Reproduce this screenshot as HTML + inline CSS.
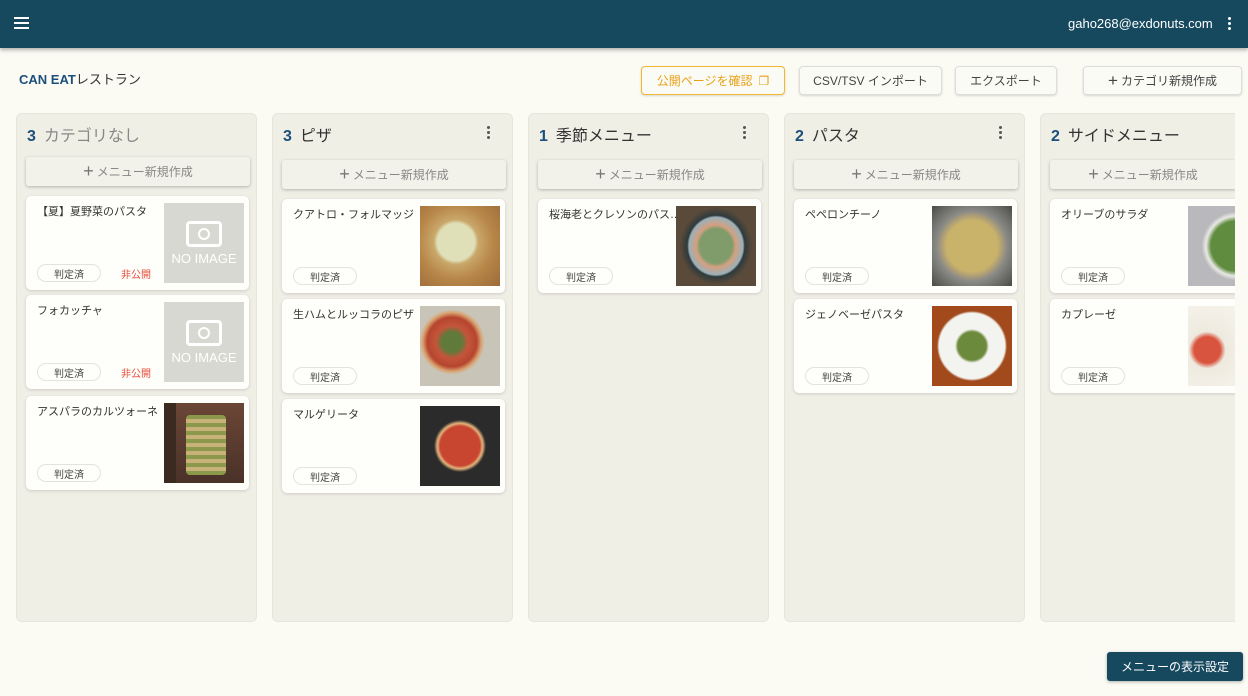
<!DOCTYPE html><html><head><meta charset="utf-8"><style>
*{box-sizing:border-box;margin:0;padding:0}
body{width:1248px;height:696px;overflow:hidden;background:#fbfbf4;font-family:"Liberation Sans","Noto Sans CJK JP",sans-serif;position:relative;color:#333}
.hdr{position:absolute;left:0;top:0;width:1248px;height:48px;background:#16485e;box-shadow:0 2px 4px rgba(0,0,0,.3)}
.abs{position:absolute}
.btn{position:absolute;top:66px;height:29px;border:1px solid #ddd;border-radius:4px;background:#fbfbf6;font-size:12px;color:#444;display:flex;align-items:center;justify-content:center;box-shadow:0 1px 2px rgba(0,0,0,.15)}
.col{position:absolute;top:113px;width:241px;height:509px;background:#f0efe6;border-radius:6px;border:1px solid #e6e5dc;overflow:hidden}
.ch{position:absolute;left:10px;top:8px;font-size:16px;color:#333}
.ch b{color:#1d4f7c;font-weight:bold;margin-right:8px}
.dots{position:absolute;left:214px;top:12px;width:3px;height:14px}
.dots i{display:block;width:3px;height:3px;border-radius:50%;background:#555;margin-bottom:2px}
.add{position:absolute;left:9px;width:224px;height:29px;background:#f3f2ea;border-radius:3px;box-shadow:0 1px 3px rgba(0,0,0,.25);font-size:12px;color:#888;display:flex;align-items:center;justify-content:center}
.add span{font-size:18px;margin-right:3px;color:#777}
.card{position:absolute;left:9px;width:223px;height:94px;background:#fefefb;border-radius:5px;box-shadow:0 1px 3px rgba(0,0,0,.15)}
.t{position:absolute;left:11px;top:7px;font-size:11px;color:#333}
.bd{position:absolute;left:11px;top:68px;width:64px;height:18px;border:1px solid #e2e2e2;border-radius:9px;font-size:10px;display:flex;align-items:center;justify-content:center;color:#444}
.np{position:absolute;left:95px;top:70px;font-size:10px;color:#e84c3a}
.im{position:absolute;left:138px;top:7px;width:80px;height:80px}
.noimg{background:#d8d8d2;color:#fff;font-size:13px;text-align:center}
</style></head><body>
<div class="hdr">
<div class="abs" style="left:14px;top:17px;width:15px"><div style="height:2px;background:#fff;margin-bottom:3px"></div><div style="height:2px;background:#fff;margin-bottom:3px"></div><div style="height:2px;background:#fff"></div></div>
<div class="abs" style="left:1068px;top:16px;font-size:13px;color:#fff">gaho268@exdonuts.com</div>
<div class="abs" style="left:1228px;top:17px"><div style="width:3px;height:3px;background:#fff;border-radius:50%;margin-bottom:2px"></div><div style="width:3px;height:3px;background:#fff;border-radius:50%;margin-bottom:2px"></div><div style="width:3px;height:3px;background:#fff;border-radius:50%"></div></div>
</div>
<div class="abs" style="left:19px;top:69px;font-size:13px;color:#1d4f7c"><b style="font-weight:600">CAN EAT</b><span style="color:#333">レストラン</span></div>
<div class="btn" style="left:641px;width:144px;border:1.5px solid #f4b731;color:#e8a21a">公開ページを確認 <span style="margin-left:6px;font-size:12px">❐</span></div>
<div class="btn" style="left:799px;width:143px">CSV/TSV インポート</div>
<div class="btn" style="left:955px;width:102px">エクスポート</div>
<div class="btn" style="left:1083px;width:159px"><span style="font-size:17px;margin-right:3px">+</span>カテゴリ新規作成</div>

<div class="col" style="left:16px">
<div class="ch"><b>3</b><span style="color:#888">カテゴリなし</span></div>
<div class="add" style="top:43px"><span>+</span>メニュー新規作成</div>
<div class="card" style="top:82px"><div class="t">【夏】夏野菜のパスタ</div><div class="bd">判定済</div><div class="np">非公開</div><div class="im noimg"><div style="width:36px;height:26px;border:3px solid #fff;border-radius:4px;margin:18px auto 4px;position:relative"><div style="width:12px;height:12px;border:2px solid #fff;border-radius:50%;margin:4px auto"></div></div>NO IMAGE</div></div>
<div class="card" style="top:181px"><div class="t">フォカッチャ</div><div class="bd">判定済</div><div class="np">非公開</div><div class="im noimg"><div style="width:36px;height:26px;border:3px solid #fff;border-radius:4px;margin:18px auto 4px"><div style="width:12px;height:12px;border:2px solid #fff;border-radius:50%;margin:4px auto"></div></div>NO IMAGE</div></div>
<div class="card" style="top:282px"><div class="t">アスパラのカルツォーネ</div><div class="bd">判定済</div><div class="im" style="background:linear-gradient(90deg,#3a2a1f 0 15%,transparent 15%),linear-gradient(#6b4636,#4a3128);"><div style="position:absolute;left:22px;top:12px;width:40px;height:60px;background:repeating-linear-gradient(#8a9a4a 0 4px,#c9b27a 4px 8px);border-radius:4px"></div></div></div>
</div>

<div class="col" style="left:272px">
<div class="ch"><b>3</b>ピザ</div><div class="dots"><i></i><i></i><i></i></div>
<div class="add" style="top:46px"><span>+</span>メニュー新規作成</div>
<div class="card" style="top:85px"><div class="t">クアトロ・フォルマッジ</div><div class="bd">判定済</div><div class="im" style="background:radial-gradient(circle at 45% 45%,#dfe0b8 0 30%,#c9a76a 36%,#b78648 60%,#9c6a3a)"></div></div>
<div class="card" style="top:185px"><div class="t">生ハムとルッコラのピザ</div><div class="bd">判定済</div><div class="im" style="background:radial-gradient(circle at 40% 45%,#5f7a3a 0 15%,#c4553a 25%,#b6452e 38%,#d9a370 45%,#c9c4b8 50%)"></div></div>
<div class="card" style="top:285px"><div class="t">マルゲリータ</div><div class="bd">判定済</div><div class="im" style="background:radial-gradient(circle,#c8452f 0 35%,#e3b37d 40%,#2b2b2b 46%)"></div></div>
</div>

<div class="col" style="left:528px">
<div class="ch"><b>1</b>季節メニュー</div><div class="dots"><i></i><i></i><i></i></div>
<div class="add" style="top:46px"><span>+</span>メニュー新規作成</div>
<div class="card" style="top:85px"><div class="t">桜海老とクレソンのパス…</div><div class="bd">判定済</div><div class="im" style="background:radial-gradient(ellipse 45% 48%,#7f9c6a 0 45%,#d4a080 55%,#9bb0b8 75%,#2e3a3c 80%,#5a4a3a)"></div></div>
</div>

<div class="col" style="left:784px">
<div class="ch"><b>2</b>パスタ</div><div class="dots"><i></i><i></i><i></i></div>
<div class="add" style="top:46px"><span>+</span>メニュー新規作成</div>
<div class="card" style="top:85px"><div class="t">ペペロンチーノ</div><div class="bd">判定済</div><div class="im" style="background:radial-gradient(circle,#c9b36a 0 45%,#a89a7a 55%,#8a8a86 62%,#4a4a48)"></div></div>
<div class="card" style="top:185px"><div class="t">ジェノベーゼパスタ</div><div class="bd">判定済</div><div class="im" style="background:radial-gradient(circle,#6c8a3c 0 25%,#f3f3ef 30% 58%,#a24a1c 62%)"></div></div>
</div>

<div class="col" style="left:1040px;width:195px;border-right:none;border-radius:6px 0 0 6px">
<div class="ch"><b>2</b>サイドメニュー</div>
<div class="add" style="top:46px;width:186px;border-radius:3px 0 0 3px"><span>+</span>メニュー新規作成</div>
<div class="card" style="top:85px;width:186px;border-radius:5px 0 0 5px"><div class="t">オリーブのサラダ</div><div class="bd">判定済</div><div class="im" style="width:48px;background:radial-gradient(circle at 100% 50%,#5f8c3e 0 40%,#e8e8e4 48%,#b9b9bd 55%)"></div></div>
<div class="card" style="top:185px;width:186px;border-radius:5px 0 0 5px"><div class="t">カプレーゼ</div><div class="bd">判定済</div><div class="im" style="width:48px;background:radial-gradient(circle at 40% 55%,#d9543e 0 25%,#eeeae0 35%,#f6f3ea)"></div></div>
</div>

<div class="abs" style="left:1107px;top:652px;width:136px;height:29px;background:#16485e;border-radius:3px;color:#fff;font-size:12px;display:flex;align-items:center;justify-content:center;box-shadow:0 1px 3px rgba(0,0,0,.3)">メニューの表示設定</div>
</body></html>
